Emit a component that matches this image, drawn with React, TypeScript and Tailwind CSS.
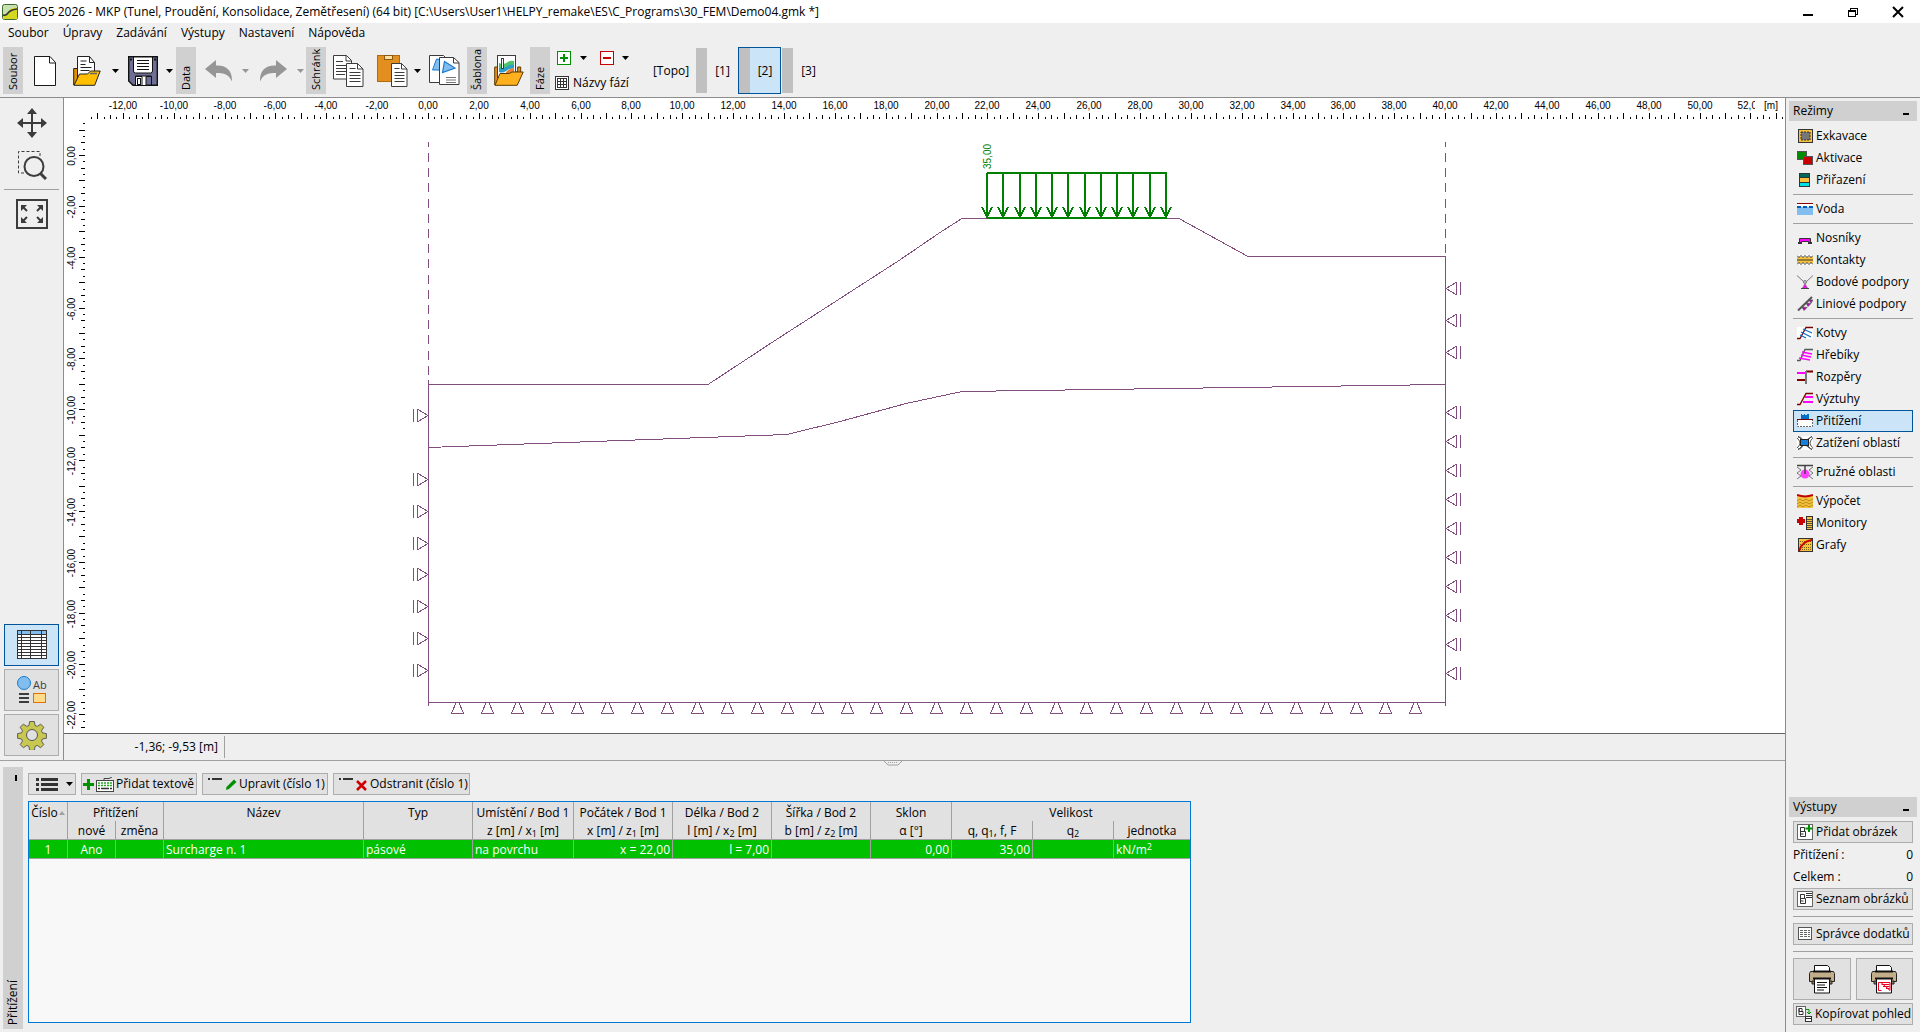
import type { ReactNode } from 'react'

const PURPLE = '#804f80'
const GREEN = '#008000'
const SCALE = 25.43
const X0 = 428
const Y0 = 155

const fmt = (n: number) => n.toFixed(2).replace('.', ',')

/* ---------- small shared pieces ---------- */

const Arrow = ({ gray }: { gray?: boolean }) => (
    <svg width="7" height="4" viewBox="0 0 7 4" className="shrink-0">
        <path d="M0 0h7L3.5 4z" fill={gray ? '#969696' : '#000'} />
    </svg>
)

const SideLabel = ({ children }: { children: string }) => (
    <div className="flex h-[47px] w-5 shrink-0 rotate-180 items-center bg-[#d0d0d0] pt-1 text-[11px] whitespace-nowrap [writing-mode:vertical-rl]">
        <span>{children}</span>
    </div>
)

const ToolButton = ({ label, className, children }: { label: string; className: string; children: ReactNode }) => (
    <button aria-label={label} className={`flex h-full shrink-0 items-center justify-center ${className}`}>
        {children}
    </button>
)

const PanelHeader = ({ children }: { children: string }) => (
    <div className="mx-[3px] flex h-5 items-center justify-between bg-[#d0d0d0] pr-2 pl-1">
        <span>{children}</span>
        <button aria-label="Minimalizovat" className="flex h-5 items-end pb-1.5">
            <span className="block h-0.5 w-1.5 bg-black" />
        </button>
    </div>
)

const Line = () => <div className="my-[3px] h-px shrink-0 bg-[#a0a0a0]" />

/* ---------- toolbar icons ---------- */

const NewIcon = () => (
    <svg width="22" height="30" viewBox="0 0 22 30">
        <path d="M.5.5H16l5.5 6v23H.5z" fill="#fff" stroke="#1a1a1a" />
        <path d="M15.5.5v6.5h6" fill="none" stroke="#1a1a1a" />
    </svg>
)

const OpenIcon = () => (
    <svg width="28" height="30" viewBox="0 0 28 30">
        <path d="M.7 29V12.5h4v5h18v4" fill="#e09000" stroke="#222" />
        <path d="M4.500 22V.5h12l5 6V20" fill="#fff" stroke="#222" />
        <path d="M16.500.5v6h5M7.500 5h6M7.500 8.500h5M7.500 11.500h11M7.500 14.500h9" fill="none" stroke="#222" />
        <path d="M1 29.300 6.500 18h8l3-3h9.700l-5.500 14.300z" fill="#ffbe00" stroke="#222" />
        <path d="M17 17.500h7" stroke="#666" strokeWidth="1.500" />
    </svg>
)

const SaveIcon = () => (
    <svg width="30" height="30" viewBox="0 0 30 30">
        <path d="M.7.7h28.600v28.600H5L.7 25z" fill="#6f6f96" stroke="#111" strokeWidth="1.400" />
        <path d="M5.500 1v14q0 2 2 2h15q2 0 2-2V1z" fill="#fff" stroke="#111" />
        <path d="M9 4.500h12M9 7.500h12M9 10.500h12M9 13.500h12" stroke="#111" />
        <path d="M7.500 29v-9h16v9" fill="#fff" stroke="#111" />
        <path d="M8 20.500h6V29" fill="none" stroke="#111" />
        <path d="M18 20.500h5.500V29H18z" fill="#6f6f96" stroke="#111" />
        <rect x="9.500" y="22.500" width="3" height="6" fill="#fff" stroke="#111" />
        <path d="M2 2.500h2v2H2zM26 2.500h2v2h-2z" fill="#111" />
    </svg>
)

const UndoIcon = ({ flip }: { flip?: boolean }) => (
    <svg width="28" height="22" viewBox="0 0 28 22">
        <path
            d="M0 9 11 0v5.500C22 5 27.500 11 27 21.500 23.500 14 19 13 11 13v5z"
            fill="#969696"
            transform={flip ? 'matrix(-1 0 0 1 28 0)' : undefined}
        />
    </svg>
)

const CopyIcon = () => (
    <svg width="31" height="32" viewBox="0 0 31 32">
        <path d="M.5.5h13l5 5v18.500H.5z" fill="#fff" stroke="#3c3c3c" />
        <path d="M13 .5V6h5.500M3 6.500h7M3 10.500h12M3 13.500h10M3 16.500h10M3 19.500h9" fill="none" stroke="#3c3c3c" />
        <path d="M13.500 8.500h11l5.500 5.500v17.500H13.500z" fill="#fff" stroke="#3c3c3c" />
        <path d="M24.500 8.500V14H30M16.500 13.500h6M16.500 17.500h11M16.500 20.500h11M16.500 23.500h11M16.500 26.500h11" fill="none" stroke="#3c3c3c" />
    </svg>
)

const PasteIcon = () => (
    <svg width="31" height="32" viewBox="0 0 31 32">
        <rect x=".5" y=".5" width="22" height="26" fill="#e38f20" stroke="#b06a10" />
        <rect x="7.500" y=".5" width="8" height="4" fill="#ffe0a0" stroke="#8a5a10" />
        <path d="M14.500 8.500h10l5.500 5.500v17.500H14.500z" fill="#fff" stroke="#3c3c3c" />
        <path d="M24.500 8.500V14H30M17.500 13.500h5M17.500 17.500h10M17.500 20.500h10M17.500 23.500h10M17.500 26.500h10" fill="none" stroke="#3c3c3c" />
    </svg>
)

const PictureCopyIcon = () => (
    <svg width="31" height="31" viewBox="0 0 31 31">
        <path d="M.5.5h14l4 4v23H.5z" fill="#fff" stroke="#3c3c3c" />
        <path d="m3.500 15 4-11 3 .5v10.500z" fill="#82bdf0" stroke="#1c7cd0" />
        <path d="M10.500 2.500h14l5.500 5v22H10.500z" fill="#fff" stroke="#3c3c3c" />
        <path d="M24.500 2.500v5.500H30" fill="none" stroke="#3c3c3c" />
        <path d="m13.500 17.500 2-11L26 13z" fill="#82bdf0" stroke="#1c7cd0" strokeWidth="1.200" />
        <path d="M17 22.500h10M17 25h10M17 27.500h10" stroke="#777" />
    </svg>
)

const TemplateIcon = () => (
    <svg width="30" height="31" viewBox="0 0 30 31">
        <path d="M.7 30V12h5v5h18v-5h3v6" fill="#e38f20" stroke="#5a3a00" />
        <rect x="3.500" y=".5" width="18" height="22" fill="#fff" stroke="#3c3c3c" />
        <path d="M5 8q5 2 8-.5t7-1.500v5q-4 0-7 2.500t-8 1z" fill="#4fc46a" />
        <path d="M5 13q5 1 8-1.500t7-2v4q-5 0-8 2.500t-7 1z" fill="#2ba0c8" />
        <path d="M12 17q4-4 8-4v5h-8z" fill="#f08030" />
        <rect x="7.500" y="3.500" width="2" height="10" fill="#fff" stroke="#3c3c3c" />
        <path d="M1 30.300 6 18.500h9l3-1.500h11.200l-6 13.300z" fill="#ffb01e" stroke="#5a3a00" />
    </svg>
)

const SmallTable = () => (
    <svg width="14" height="14" viewBox="0 0 14 14" shapeRendering="crispEdges">
        <rect x=".5" y=".5" width="13" height="13" fill="#fff" stroke="#333" />
        <path d="M2.500 2.500h9v9h-9zM2.500 5.500h9M2.500 8.500h9M5.500 3v8M8.500 3v8" fill="none" stroke="#333" />
    </svg>
)

/* ---------- mode list ---------- */

const icons: Record<string, ReactNode> = {
    excav: (
        <g>
            <rect x="1.500" y="1.500" width="14" height="13" fill="#f8c33c" stroke="#333" />
            <rect x="4" y="4" width="9" height="8" fill="#777" stroke="#333" strokeDasharray="2 1" />
        </g>
    ),
    activ: (
        <g>
            <rect x=".5" y="1.500" width="9" height="8" fill="#008c00" stroke="#555" />
            <rect x="6.500" y="6.500" width="9" height="8" fill="#c80000" stroke="#555" />
        </g>
    ),
    assign: (
        <g>
            <rect x="2.500" y="1.500" width="10" height="13" fill="#f8c33c" stroke="#333" />
            <path d="M3 2h9v3H3z" fill="#00695c" />
            <path d="M3 11h9v3H3z" fill="#00e0e8" />
            <path d="M3 5.500h9M3 10.500h9" stroke="#333" />
        </g>
    ),
    water: (
        <g shapeRendering="crispEdges">
            <path d="M0 2h16v3H0z" fill="#fff" />
            <rect y="6" width="16" height="8" fill="#82bdf0" />
            <path d="M0 2.500h16" stroke="#8b0000" />
            <path d="M0 6h16" stroke="#0060c0" strokeWidth="2" strokeDasharray="4 2" />
        </g>
    ),
    beam: (
        <g>
            <path d="M1 13h4M11 13h4" stroke="#333" strokeWidth="2" />
            <path d="M2.500 12.500v-4h11v4h-2v-1h-7v1z" fill="#ff00ff" stroke="#333" />
        </g>
    ),
    contact: (
        <g>
            <path d="M0 3h16v10H0z" fill="#fff" />
            <rect y="5" width="16" height="6" fill="#f8c33c" />
            <path d="m0 3.500 2 2 2-2 2 2 2-2 2 2 2-2 2 2 2-2M0 12.500l2-2 2 2 2-2 2 2 2-2 2 2 2-2 2 2M0 8h16" fill="none" stroke="#333" />
        </g>
    ),
    point: (
        <g>
            <path d="M0 1.500 7 8M16 1.500 9 8" stroke="#777" />
            <circle cx="8" cy="8" r="1.500" fill="#ccc" stroke="#777" />
            <path d="m8 9.500-2.500 4.500h5z" fill="#ff00ff" stroke="#777" strokeWidth=".6" />
            <path d="M4 14.500h8" stroke="#444" />
        </g>
    ),
    linear: (
        <g>
            <path d="M1 14.500 15 1" stroke="#555" strokeWidth="2" />
            <path d="m5 11 5 .5-3 3zM9 7l5 .5-3 3zM12 4h4l-2 3z" fill="#c000c0" stroke="#555" strokeWidth=".7" />
        </g>
    ),
    anchor: (
        <g>
            <rect y="2" width="16" height="12" fill="#fff" />
            <path d="M0 13.500h3l6-11h7" fill="none" stroke="#7b0000" strokeWidth="1.300" />
            <path d="m6 4 9 4M4 7l10 5M3 10l6 3" stroke="#1070c8" strokeWidth="1.300" />
        </g>
    ),
    nail: (
        <g>
            <path d="M0 13.500h3l5-11h8" fill="none" stroke="#555" strokeWidth="1.300" />
            <path d="m5 5 10 2M4 8l10 2M2 11l11 2" stroke="#ff00ff" strokeWidth="1.300" />
        </g>
    ),
    strut: (
        <g>
            <path d="M0 4h9" stroke="#ff00ff" strokeWidth="2" />
            <path d="M0 11h9M9 2.500h7" stroke="#7b0000" strokeWidth="2" />
            <path d="M9 2v13" stroke="#777" strokeWidth="2" />
        </g>
    ),
    reinf: (
        <g>
            <path d="M0 13.500h3l6-11h7" fill="none" stroke="#7b0000" strokeWidth="1.300" />
            <path d="M8 6h8M6 11h10" stroke="#ff00ff" strokeWidth="2" />
        </g>
    ),
    surcharge: (
        <g>
            <rect y="6" width="16" height="8" fill="#fff" />
            <path d="M4 1h1v1h2V1h1v1h2V1h2v5H4z" fill="#0070c8" />
            <path d="M0 6.500h16" stroke="#7b0000" />
            <path d="M.5 7v6.500h15V7" fill="none" stroke="#666" strokeDasharray="2 1" />
        </g>
    ),
    areaLoad: (
        <g>
            <rect y="1" width="16" height="14" fill="#fff" />
            <path d="M0 4q3-4 5 0t6 0 5 0M0 12q3 4 5 0t6 0 5 0M1 1l5 5M15 1l-5 5M1 15l5-5M15 15l-5-5M1 4q4 4 0 8M15 4q-4 4 0 8" fill="none" stroke="#555" />
            <rect x="3.500" y="4.500" width="8" height="6" fill="#1880d8" stroke="#222" />
        </g>
    ),
    elastic: (
        <g>
            <rect y="1" width="16" height="14" fill="#eee" />
            <path d="m0 3 4 3-4 3 4 3-4 3M16 3l-4 3 4 3-4 3 4 3" fill="none" stroke="#777" />
            <circle cx="8" cy="10" r="4.500" fill="#ff40ff" />
            <path d="M0 1.500h16M8 1v9" stroke="#444" strokeWidth="1.500" />
        </g>
    ),
    calc: (
        <g>
            <rect y="2" width="16" height="13" fill="#f8c33c" />
            <path d="m0 8 3-2 3 2 3-2 3 2 4-2M0 11l3-2 3 2 3-2 3 2 4-2M0 14l3-2 3 2 3-2 3 2 4-2" fill="none" stroke="#a07810" strokeWidth=".8" />
            <path d="M0 2q8 3 16 0V0H0z" fill="#efefef" />
            <path d="M0 2q8 3 16 0" fill="none" stroke="#c00000" strokeWidth="2" />
        </g>
    ),
    monitor: (
        <g>
            <path d="M0 6h8M4 2v8" stroke="#c80000" strokeWidth="4" />
            <rect x="9.500" y="1.500" width="6" height="13" fill="#f8c33c" stroke="#333" />
            <path d="M10 4.500h5M10 6.500h5M10 8.500h5M10 10.500h5M10 12.500h5" stroke="#333" strokeWidth=".8" />
        </g>
    ),
    graph: (
        <g>
            <rect x="1.500" y="1.500" width="14" height="13" fill="#f8c33c" stroke="#333" />
            <path d="M3 4.500h12M3 7.500h12M3 10.500h12M3 12.500h12" stroke="#806010" strokeDasharray="1 1" />
            <path d="M2 14Q5 4 15 3" fill="none" stroke="#c80000" strokeWidth="2" />
        </g>
    ),
}

const modeGroups = [
    [['excav', 'Exkavace'], ['activ', 'Aktivace'], ['assign', 'Přiřazení']],
    [['water', 'Voda']],
    [['beam', 'Nosníky'], ['contact', 'Kontakty'], ['point', 'Bodové podpory'], ['linear', 'Liniové podpory']],
    [['anchor', 'Kotvy'], ['nail', 'Hřebíky'], ['strut', 'Rozpěry'], ['reinf', 'Výztuhy'], ['surcharge', 'Přitížení'], ['areaLoad', 'Zatížení oblastí']],
    [['elastic', 'Pružné oblasti']],
    [['calc', 'Výpočet'], ['monitor', 'Monitory'], ['graph', 'Grafy']],
]

const PictureIcon = ({ kind }: { kind: 'add' | 'list' | 'doc' | 'copy' }) => (
    <svg width="16" height="16" viewBox="0 0 16 16" className="shrink-0">
        {kind === 'doc' ? (
            <g shapeRendering="crispEdges">
                <rect x="1.500" y="1.500" width="13" height="12" fill="#fff" stroke="#555" />
                <path d="M3 4.500h10M3 6.500h10M3 8.500h10M3 10.500h10" stroke="#666" strokeDasharray="3 1" />
            </g>
        ) : (
            <g>
                <rect x=".5" y=".5" width={kind === 'copy' ? 9 : 15} height={kind === 'copy' ? 10 : 15} fill="#fff" stroke="#666" />
                <path d={kind === 'copy' ? 'M3 2.500v6h4v-3H3v-3h3v3' : 'M3.500 3.500v9h5v-5h-5v-4h4v4M3.500 10h3'} fill="none" stroke="#333" />
                {kind === 'add' && <path d="M8.500 4.500h7M12 1v7" stroke="#009000" strokeWidth="2" />}
                {kind === 'list' && <path d="M9 2.500h6M9 4.500h6M9 6.500h6" stroke="#333" />}
                {kind === 'copy' && (
                    <g>
                        <path d="M10 3.500h3V8m-2-2 2 2 2-2" fill="none" stroke="#009000" />
                        <rect x="9.500" y="10.500" width="6" height="5" fill="#fff" stroke="#333" />
                        <path d="M10 12.500h5" stroke="#333" />
                    </g>
                )}
            </g>
        )}
    </svg>
)

const PrinterIcon = ({ red }: { red?: boolean }) => (
    <svg width="26" height="30" viewBox="0 0 26 30">
        <path d="M5.500 9V1.500h13l2 2V9" fill="#fff" stroke="#111" />
        <path d="M1.500 7.500h23l1 2v8h-25v-8z" fill="#c3ae8a" stroke="#222" />
        <path d="M4 7.500h18" stroke="#111" strokeWidth="2" />
        <path d="M3 17h20v3H3z" fill="#8d7b5c" stroke="#222" />
        <path d="M4 14.500h18" stroke="#111" strokeWidth="2" />
        <path d="M5.500 15h15v14h-15z" fill="#fff" stroke="#111" />
        {red ? (
            <path d="M10 18.500H7.500v8h3M10 18.500h9v8zM10.500 20.500h8M12 22.500h6.500M15 24.500h3.500" fill="none" stroke="#f00020" />
        ) : (
            <path d="M8 18.500h10M8 21h8M8 23.500h10M8 26h7" stroke="#111" />
        )}
    </svg>
)

const BTN = 'border border-[#adadad] bg-[#e1e1e1]'

const RightPanel = () => (
    <aside className="flex w-[135px] shrink-0 flex-col border-l border-[#8c8c8c] pt-[3px]">
        <PanelHeader>Režimy</PanelHeader>
        <nav className="mx-[7px] mt-1 flex flex-col">
            {modeGroups.map((group, i) => (
                <div key={i}>
                    {i > 0 && <Line />}
                    {group.map(([icon, label]) => (
                        <button
                            key={label}
                            className={`flex h-[22px] w-full items-center gap-[3px] border px-[3px] whitespace-nowrap ${
                                label === 'Přitížení' ? 'border-[#005499] bg-[#cce4f7]' : 'border-transparent'
                            }`}
                        >
                            <svg width="16" height="16" viewBox="0 0 16 16" className="shrink-0">{icons[icon]}</svg>
                            {label}
                        </button>
                    ))}
                </div>
            ))}
        </nav>
        <div className="flex-1" />
        <PanelHeader>Výstupy</PanelHeader>
        <div className="mx-[7px] mt-1 mb-[7px] flex flex-col">
            <button className={`flex h-[22px] items-center gap-[3px] px-[3px] whitespace-nowrap ${BTN}`}>
                <PictureIcon kind="add" />
                Přidat obrázek
            </button>
            <div className="mt-px flex h-[22px] items-center justify-between"><span>Přitížení :</span><span>0</span></div>
            <div className="flex h-[21px] items-center justify-between"><span>Celkem :</span><span>0</span></div>
            <button className={`mt-px flex h-[22px] items-center gap-[3px] px-[3px] whitespace-nowrap ${BTN}`}>
                <PictureIcon kind="list" />
                Seznam obrázků
            </button>
            <div className="my-1.5 h-px bg-[#a0a0a0]" />
            <button className={`flex h-[22px] items-center gap-[3px] px-[3px] whitespace-nowrap ${BTN}`}>
                <PictureIcon kind="doc" />
                Správce dodatků
            </button>
            <div className="my-1.5 h-px bg-[#a0a0a0]" />
            <div className="flex gap-[5px]">
                <button aria-label="Tisk textu" className={`flex h-[42px] flex-1 items-center justify-center ${BTN}`}><PrinterIcon /></button>
                <button aria-label="Tisk obrázku" className={`flex h-[42px] flex-1 items-center justify-center ${BTN}`}><PrinterIcon red /></button>
            </div>
            <button className={`mt-[3px] flex h-[22px] items-center gap-[3px] px-0.5 whitespace-nowrap ${BTN}`}>
                <PictureIcon kind="copy" />
                Kopírovat pohled
            </button>
        </div>
    </aside>
)

/* ---------- drawing area ---------- */

const tickLength = (i: number) => (i % 4 === 0 ? 6 : i % 2 === 0 ? 4 : 2)

const Rulers = () => {
    const xTicks = Array.from({ length: 268 }, (_, i) => i - 53)
    const yTicks = Array.from({ length: 96 }, (_, i) => i - 90)
    return (
        <g>
            <g stroke="#000" shapeRendering="crispEdges">
                {xTicks.map((i) => {
                    const x = Math.round(X0 + (i * SCALE) / 4) + 0.5
                    return <path key={i} d={`M${x} 119v-${tickLength(i)}`} />
                })}
                {yTicks.map((i) => {
                    const y = Math.round(Y0 - (i * SCALE) / 4) + 0.5
                    return <path key={i} d={`M85 ${y}h-${tickLength(i)}`} />
                })}
            </g>
            <g fontSize="10" textAnchor="middle" fill="#000" className="font-['Liberation_Sans',sans-serif]">
                {xTicks.filter((i) => i % 8 === 0 && i <= 208).map((i) => (
                    <text key={i} x={Math.round(X0 + (i * SCALE) / 4)} y="109">{fmt(i / 4)}</text>
                ))}
                {yTicks.filter((i) => i % 8 === 0).map((i) => (
                    <text key={i} transform={`translate(75 ${Math.round(Y0 - (i * SCALE) / 4) + 1}) rotate(-90)`}>{fmt(i / 4)}</text>
                ))}
                <rect x="1755" y="99" width="30" height="12" fill="#fff" />
                <text x="1771" y="109">[m]</text>
            </g>
        </g>
    )
}

const leftSupports = [415, 479, 511, 543, 574, 606, 638, 670]
const rightSupports = [288, 320, 352, 412, 441, 470, 499, 528, 557, 586, 615, 644, 673]
const bottomSupports = Array.from({ length: 33 }, (_, i) => Math.round(457.3 + i * 29.94))
const loadArrows = Array.from({ length: 12 }, (_, i) => Math.round(987 + i * 16.27))

const Canvas = () => (
    <div className="relative min-h-0 flex-1 border-b border-[#646464] bg-white">
        <svg className="absolute inset-0 h-full w-full" role="img" aria-label="Model">
            <g transform="translate(-64 -98)">
                <Rulers />
                <g fill="none" stroke={PURPLE} shapeRendering="crispEdges">
                    <path d="M428.500 142V147M1445.500 142V147" />
                    <path d="M428.500 153V380M1445.500 153V256" strokeDasharray="9 6.200" />
                    <path d="M428.500 380V706M1445.500 256V706M428 702.500H1446" />
                    <path d="M428 384.500H708L775 340.500 899 260.500 940 232.500 962 218.500H1179L1248 256.500H1446" />
                    <path d="M428 447.500 787 434.500 840 421.500 906 403.500 962 391.500 1445 384.500" />
                    {leftSupports.map((y) => (
                        <path key={y} d={`M413.500 ${y - 6}v13M417.500 ${y - 6}v13M418 ${y - 5.500}l10 6-10 6`} />
                    ))}
                    {rightSupports.map((y) => (
                        <path key={y} d={`M1460.500 ${y - 6}v13M1456.500 ${y - 6}v13M1456 ${y - 5.500}l-10 6 10 6`} />
                    ))}
                    {bottomSupports.map((x) => (
                        <path key={x} d={`M${x - 6} 713.500h13M${x - 5.500} 713l5-11h2l5 11`} />
                    ))}
                </g>
                <g fill="none" stroke={GREEN} strokeWidth="2" shapeRendering="crispEdges">
                    <path d="M987 173H1167M987 218H1167" />
                    {loadArrows.map((x) => (
                        <path key={x} d={`M${x} 173v45M${x - 5} 207l5 10 5-10`} />
                    ))}
                </g>
                <text transform="translate(991 169) rotate(-90)" fontSize="10" fill={GREEN} className="font-['Liberation_Sans',sans-serif]">35,00</text>
            </g>
        </svg>
    </div>
)

/* ---------- left strip ---------- */

const LeftStrip = () => (
    <div className="flex w-[63px] shrink-0 flex-col items-center px-1 pb-1">
        <button aria-label="Posun" className="mt-2.5">
            <svg width="30" height="30" viewBox="0 0 30 30">
                <path d="M15 4v22M4 15h22" stroke="#3c3c3c" strokeWidth="2" />
                <path d="m15 0 5 6H10zM15 30l5-6H10zM0 15l6-5v10zM30 15l-6-5v10z" fill="#3c3c3c" />
            </svg>
        </button>
        <button aria-label="Lupa" className="mt-3">
            <svg width="30" height="30" viewBox="0 0 30 30">
                <path d="M23 6V1.500H1.500V23H7" fill="none" stroke="#3c3c3c" strokeDasharray="3 2" />
                <circle cx="17" cy="16.500" r="9.500" fill="none" stroke="#3c3c3c" strokeWidth="2" />
                <path d="m23 23 6 6" stroke="#3c3c3c" strokeWidth="3" />
            </svg>
        </button>
        <div className="mt-[9px] h-px w-full bg-[#a0a0a0]" />
        <button aria-label="Zobrazit vše" className="mt-[9px]">
            <svg width="32" height="30" viewBox="0 0 32 30">
                <rect x="1" y="1" width="30" height="28" fill="none" stroke="#3c3c3c" strokeWidth="2" />
                <path d="M5 6h6l-6 6zM27 6h-6l6 6zM5 24h6l-6-6zM27 24h-6l6-6z" fill="#3c3c3c" />
                <path d="m6 7 5 5M26 7l-5 5M6 23l5-5M26 23l-5-5" stroke="#3c3c3c" strokeWidth="2" />
            </svg>
        </button>
        <div className="flex-1" />
        <div className="flex w-full flex-col gap-[3px]">
            <button aria-label="Tabulka" className="flex h-[42px] items-center justify-center border border-[#005499] bg-[#cce4f7]">
                <svg width="30" height="30" viewBox="0 0 30 30" shapeRendering="crispEdges">
                    <rect x=".5" y=".5" width="29" height="28" fill="#fff" stroke="#333" />
                    <path d="M1 1h28v3H1z" fill="#82bdf0" />
                    <path d="M1 4.500h28M1 7.500h28M1 10.500h28M1 13.500h28M1 16.500h28M1 19.500h28M1 22.500h28M1 25.500h28M4.500 1v28M13.500 1v28M24.500 1v28" stroke="#333" />
                </svg>
            </button>
            <button aria-label="Vykreslení" className={`flex h-[42px] items-center justify-center ${BTN}`}>
                <svg width="30" height="28" viewBox="0 0 30 28">
                    <circle cx="7" cy="7" r="6.500" fill="#82bdf0" stroke="#1c7cd0" />
                    <text x="16" y="13" fontSize="11" fill="#3c3c3c">Ab</text>
                    <path d="M2 18h10M2 22h10M2 26h10" stroke="#3c3c3c" strokeWidth="2" />
                    <rect x="16.500" y="17.500" width="12" height="9" fill="#ffdc8c" stroke="#e07000" />
                </svg>
            </button>
            <button aria-label="Nastavení" className={`flex h-[42px] items-center justify-center ${BTN}`}>
                <svg width="30" height="30" viewBox="-15 -15 30 30">
                    <path
                        d="M-2.500-14.500h5l.8 4.300 2.300 1 3.700-2.500 3.400 3.400-2.500 3.700 1 2.300 4.300.8v5l-4.300.8-1 2.300 2.500 3.700-3.400 3.400-3.700-2.500-2.300 1-.8 4.300h-5l-.8-4.300-2.300-1-3.700 2.500-3.400-3.400 2.500-3.700-1-2.300-4.300-.8v-5l4.300-.8 1-2.300-2.500-3.700 3.400-3.400 3.700 2.500 2.300-1z"
                        fill="#c8c850"
                        stroke="#555"
                        transform="scale(.93)"
                    />
                    <circle r="5.500" fill="#e1e1e1" stroke="#555" />
                </svg>
            </button>
        </div>
    </div>
)

/* ---------- bottom panel ---------- */

const TH = 'border-r border-[#a0a0a0] p-0 pt-0.5 text-center font-normal whitespace-nowrap last:border-r-0'
const TD = 'border-r border-b border-[#a0a0a0] px-0.5 pt-0.5 pb-0 whitespace-nowrap last:border-r-0'

const columnWidths = [39, 48, 48, 200, 109, 101, 99, 99, 99, 81, 81, 81, 76]

const SurchargeTable = () => (
    <table className="w-full table-fixed border-separate border-spacing-0">
        <colgroup>
            {columnWidths.map((w, i) => <col key={i} style={{ width: w }} />)}
        </colgroup>
        <thead className="bg-[#e1e1e1]">
            <tr className="h-[19px]">
                <th className={TH}>
                    <span className="flex items-center justify-center gap-px">
                        Číslo
                        <svg width="6" height="4" viewBox="0 0 6 4" className="shrink-0"><path d="m3 0 3 4H0z" fill="#a0a0a0" /></svg>
                    </span>
                </th>
                <th className={TH} colSpan={2}>Přitížení</th>
                <th className={TH}>Název</th>
                <th className={TH}>Typ</th>
                <th className={TH}>Umístění / Bod 1</th>
                <th className={TH}>Počátek / Bod 1</th>
                <th className={TH}>Délka / Bod 2</th>
                <th className={TH}>Šířka / Bod 2</th>
                <th className={TH}>Sklon</th>
                <th className={TH} colSpan={3}>Velikost</th>
            </tr>
            <tr className="h-[19px] [&>th]:border-b">
                <th className={TH} />
                <th className={TH}>nové</th>
                <th className={TH}>změna</th>
                <th className={TH} />
                <th className={TH} />
                <th className={TH}>z [m] / x<sub className="text-[9px]">1</sub> [m]</th>
                <th className={TH}>x [m] / z<sub className="text-[9px]">1</sub> [m]</th>
                <th className={TH}>l [m] / x<sub className="text-[9px]">2</sub> [m]</th>
                <th className={TH}>b [m] / z<sub className="text-[9px]">2</sub> [m]</th>
                <th className={TH}>α [°]</th>
                <th className={TH}>q, q<sub className="text-[9px]">1</sub>, f, F</th>
                <th className={TH}>q<sub className="text-[9px]">2</sub></th>
                <th className={TH}>jednotka</th>
            </tr>
        </thead>
        <tbody>
            <tr className="h-[19px] bg-[#00c000] text-white">
                <td className={`${TD} text-center`}>1</td>
                <td className={`${TD} text-center`}>Ano</td>
                <td className={TD} />
                <td className={TD}>Surcharge n. 1</td>
                <td className={TD}>pásové</td>
                <td className={TD}>na povrchu</td>
                <td className={`${TD} text-right`}>x = 22,00</td>
                <td className={`${TD} text-right`}>l = 7,00</td>
                <td className={TD} />
                <td className={`${TD} text-right`}>0,00</td>
                <td className={`${TD} text-right`}>35,00</td>
                <td className={TD} />
                <td className={TD}>kN/m<sup className="text-[9px]">2</sup></td>
            </tr>
        </tbody>
    </table>
)

const BottomPanel = () => (
    <section className="relative flex h-[272px] shrink-0 border-t border-[#a0a0a0] pt-1.5 pr-2 pb-[3px] pl-[3px]">
        <svg width="18" height="5" viewBox="0 0 18 5" className="absolute top-0 left-1/2 -translate-x-1/2">
            <path d="m0 0 4 4h10l4-4" fill="none" stroke="#a0a0a0" />
            <path d="M4 1.500h10" stroke="#a0a0a0" strokeDasharray="1 1" />
        </svg>
        <div className="flex w-5 shrink-0 flex-col items-center justify-between bg-[#d0d0d0] pt-2 pb-1">
            <button aria-label="Minimalizovat" className="ml-1.5 h-1.5 w-0.5 bg-black" />
            <span className="rotate-180 whitespace-nowrap [writing-mode:vertical-rl]">Přitížení</span>
        </div>
        <div className="ml-[5px] flex min-w-0 flex-1 flex-col pt-1.5 pb-1.5">
            <div className="flex gap-[5px] whitespace-nowrap">
                <button aria-label="Seznam" className={`flex h-[22px] w-12 items-center justify-between pr-0.5 pl-[7px] ${BTN}`}>
                    <svg width="22" height="13" viewBox="0 0 22 13" shapeRendering="crispEdges">
                        <path d="M0 1.500h3M5 1.500h17M0 6.500h3M5 6.500h17M0 11.500h3M5 11.500h17" stroke="#333" strokeWidth="3" />
                    </svg>
                    <Arrow />
                </button>
                <button className={`flex h-[22px] w-[116px] items-center gap-0.5 px-px ${BTN}`}>
                    <svg width="11" height="11" viewBox="0 0 11 11" className="shrink-0"><path d="M0 5.500h11M5.500 0v11" stroke="#009000" strokeWidth="3" /></svg>
                    <svg width="18" height="15" viewBox="0 0 18 15" className="shrink-0">
                        <path d="M8 3V1.500h5L16 0" fill="none" stroke="#444" />
                        <rect x=".5" y="3.500" width="17" height="11" fill="#fff" stroke="#444" />
                        <path d="M2 6h14M2 8.500h14" stroke="#2a2" strokeWidth="1.500" strokeDasharray="2 1" />
                        <path d="M2 11.500h2M5 11.500h8M14 11.500h2" stroke="#333" strokeWidth="1.500" />
                    </svg>
                    Přidat textově
                </button>
                <button className={`flex h-[22px] w-[126px] items-center gap-0.5 px-[5px] ${BTN}`}>
                    <svg width="29" height="13" viewBox="0 0 29 13" className="shrink-0">
                        <path d="M0 1h2M4 1h10" stroke="#333" strokeWidth="2" />
                        <path d="m18 12 .5-3L26 1.500l2.500 2.500-7.500 7z" fill="#009000" />
                    </svg>
                    Upravit (číslo 1)
                </button>
                <button className={`flex h-[22px] w-[137px] items-center gap-0.5 px-[5px] ${BTN}`}>
                    <svg width="29" height="13" viewBox="0 0 29 13" className="shrink-0">
                        <path d="M0 1h2M4 1h10" stroke="#333" strokeWidth="2" />
                        <path d="m18 3 9 9M27 3l-9 9" stroke="#d00000" strokeWidth="2.500" />
                    </svg>
                    Odstranit (číslo 1)
                </button>
            </div>
            <div className="mt-1.5 w-full max-w-[1163px] flex-1 overflow-hidden border border-[#0078d7] bg-[#f8f8f8]">
                <SurchargeTable />
            </div>
        </div>
    </section>
)

/* ---------- top bars ---------- */

const TitleBar = () => (
    <header className="flex h-[23px] shrink-0 items-center bg-white pl-0.5">
        <svg width="16" height="16" viewBox="0 0 16 16">
            <rect x=".5" y=".5" width="15" height="15" rx="2" fill="#c8e0b0" stroke="#3a6a2a" />
            <path d="M1 11q4 0 6-4t8-3v11H1z" fill="#d4d820" />
            <path d="M1 11q3 1 5-2t9-4" fill="none" stroke="#333" strokeWidth="1.500" />
        </svg>
        <h1 className="ml-[5px] flex-1 whitespace-nowrap">
            {'GEO5 2026 - MKP (Tunel, Proudění, Konsolidace, Zemětřesení) (64 bit) [C:\\Users\\User1\\HELPY_remake\\ES\\C_Programs\\30_FEM\\Demo04.gmk *]'}
        </h1>
        <button aria-label="Minimalizovat okno" className="flex h-full w-[45px] items-center justify-center">
            <svg width="10" height="10" viewBox="0 0 10 10"><path d="M0 8h10" stroke="#000" strokeWidth="2" /></svg>
        </button>
        <button aria-label="Obnovit okno" className="flex h-full w-[45px] items-center justify-center">
            <svg width="10" height="10" viewBox="0 0 10 10" shapeRendering="crispEdges">
                <path d="M.5 4v5.500h7V4M0 3.500h8" fill="none" stroke="#000" />
                <path d="M0 3.500h8" stroke="#000" strokeWidth="2" />
                <path d="M2.500 3V1h7v6H8" fill="none" stroke="#000" />
            </svg>
        </button>
        <button aria-label="Zavřít okno" className="flex h-full w-[45px] items-center justify-center">
            <svg width="12" height="12" viewBox="0 0 12 12"><path d="m1 1 10 10M11 1 1 11" stroke="#000" strokeWidth="2" /></svg>
        </button>
    </header>
)

const menu = ['Soubor', 'Úpravy', 'Zadávání', 'Výstupy', 'Nastavení', 'Nápověda']

const Toolbar = () => (
    <div className="flex h-[50px] shrink-0 items-start pl-[3px]">
        <div className="flex h-[47px] items-center">
            <SideLabel>Soubor</SideLabel>
            <ToolButton label="Nový" className="w-11"><NewIcon /></ToolButton>
            <ToolButton label="Otevřít" className="w-10"><OpenIcon /></ToolButton>
            <ToolButton label="Otevřít – možnosti" className="w-4"><Arrow /></ToolButton>
            <ToolButton label="Uložit" className="w-10"><SaveIcon /></ToolButton>
            <ToolButton label="Uložit – možnosti" className="w-[13px]"><Arrow /></ToolButton>
            <SideLabel>Data</SideLabel>
            <ToolButton label="Zpět" className="w-[46px]"><UndoIcon /></ToolButton>
            <ToolButton label="Zpět – možnosti" className="w-[7px]"><Arrow gray /></ToolButton>
            <ToolButton label="Znovu" className="w-12"><UndoIcon flip /></ToolButton>
            <ToolButton label="Znovu – možnosti" className="mr-0.5 w-[7px]"><Arrow gray /></ToolButton>
            <SideLabel>Schránk</SideLabel>
            <ToolButton label="Kopírovat" className="w-11"><CopyIcon /></ToolButton>
            <ToolButton label="Vložit" className="w-11"><PasteIcon /></ToolButton>
            <ToolButton label="Vložit – možnosti" className="w-[7px]"><Arrow /></ToolButton>
            <ToolButton label="Kopírovat obrázek" className="w-[46px]"><PictureCopyIcon /></ToolButton>
            <SideLabel>Šablona</SideLabel>
            <ToolButton label="Šablona" className="w-[43px]"><TemplateIcon /></ToolButton>
            <SideLabel>Fáze</SideLabel>
            <div className="ml-[5px] flex h-full flex-col justify-between pt-0.5">
                <div className="flex h-[18px] items-center pl-0.5">
                    <button aria-label="Přidat fázi" className="mr-[9px]">
                        <svg width="14" height="14" viewBox="0 0 14 14" className="block">
                            <rect x=".5" y=".5" width="13" height="13" fill="#fff" stroke="#009000" />
                            <path d="M3 7h8M7 3v8" stroke="#009000" strokeWidth="2" />
                        </svg>
                    </button>
                    <Arrow />
                    <button aria-label="Odebrat fázi" className="mr-2 ml-[13px]">
                        <svg width="14" height="14" viewBox="0 0 14 14" className="block">
                            <rect x=".5" y=".5" width="13" height="13" fill="#fff" stroke="#c80000" />
                            <path d="M3 7h8" stroke="#c80000" strokeWidth="2" />
                        </svg>
                    </button>
                    <Arrow />
                </div>
                <button className="flex h-[22px] items-center gap-1 whitespace-nowrap"><SmallTable />Názvy fází</button>
            </div>
        </div>
        <div className="ml-[17px] flex h-[47px]">
            <button className="flex w-[50px] items-center justify-center">[Topo]</button>
            <div className="my-px w-[11px] bg-[#c0c0c0]" />
            <button className="flex w-[31px] items-center justify-center">[1]</button>
            <button className="flex w-[43px] border border-[#005499] bg-[#cce4f7]">
                <span className="h-full w-[11px] bg-[#c0c0c0]" />
                <span className="flex h-full flex-1 items-center justify-center">[2]</span>
            </button>
            <div className="my-px ml-px w-[11px] bg-[#c0c0c0]" />
            <button className="flex w-[31px] items-center justify-center">[3]</button>
        </div>
    </div>
)

const App = () => {
    return (
        <div className="flex h-screen flex-col overflow-hidden bg-[#efefef] font-['Open_Sans',sans-serif] text-[12px] leading-4 text-black">
            <TitleBar />
            <nav className="flex h-6 shrink-0 items-start pt-0.5 pl-px">
                {menu.map((item) => (
                    <button key={item} className="px-[7px]">{item}</button>
                ))}
            </nav>
            <Toolbar />
            <div className="flex min-h-0 flex-1 border-t border-[#8c8c8c]">
                <div className="flex min-w-0 flex-1 flex-col">
                    <div className="flex min-h-0 flex-1">
                        <LeftStrip />
                        <main className="flex min-w-0 flex-1 flex-col border-l border-[#8c8c8c]">
                            <Canvas />
                            <div className="flex h-[26px] shrink-0 items-center py-0.5">
                                <div className="flex h-full w-[161px] items-center justify-end border-r border-[#a0a0a0] pr-1.5">-1,36; -9,53 [m]</div>
                            </div>
                        </main>
                    </div>
                    <BottomPanel />
                </div>
                <RightPanel />
            </div>
        </div>
    )
}

export default App
